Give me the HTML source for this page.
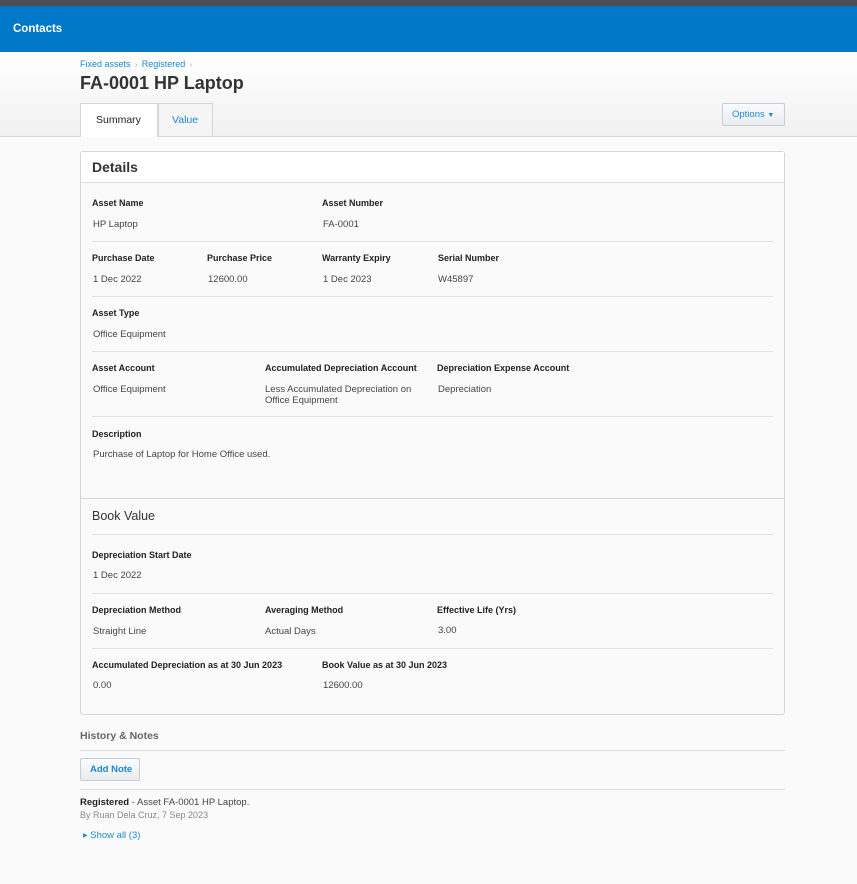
<!DOCTYPE html>
<html><head><meta charset="utf-8"><style>
*{margin:0;padding:0;box-sizing:border-box}
body{width:857px;height:884px;background:#fafafa;font-family:"Liberation Sans",Arial,sans-serif;position:relative;overflow:hidden;color:#333}
.a{position:absolute;white-space:nowrap}
.l{font-size:9px;font-weight:bold;color:#222}
.v{font-size:9.5px;color:#444}
.sep{position:absolute;left:92px;width:681px;height:1px;background:#e2e2e2}
</style></head><body>
<div class="a" style="left:0;top:0;width:857px;height:6px;background:#4b4f54"></div>
<div class="a" style="left:0;top:6px;width:857px;height:46px;background:#0078c8"></div>
<div class="a" style="left:13px;top:23px;font-size:11.5px;font-weight:bold;color:#fff">Contacts</div>
<div class="a" style="left:0;top:52px;width:857px;height:85px;background:linear-gradient(#fff,#f1f1f1);border-bottom:1px solid #d6d6d6"></div>
<div class="a" style="left:80px;top:59px;font-size:9px;color:#1a8ad0">Fixed assets <span style="color:#999;font-size:7px">&nbsp;›&nbsp;</span> Registered <span style="color:#999;font-size:7px">&nbsp;›</span></div>
<div class="a" style="left:80px;top:73px;font-size:18px;font-weight:bold;color:#333">FA-0001 HP Laptop</div>
<div class="a" style="left:80px;top:103px;width:78px;height:34px;background:#fff;border:1px solid #d6d6d6;border-bottom:none"></div>
<div class="a" style="left:96px;top:114px;font-size:10.5px;color:#222">Summary</div>
<div class="a" style="left:158px;top:103px;width:55px;height:33px;background:#f5f5f5;border:1px solid #d6d6d6;border-bottom:none"></div>
<div class="a" style="left:172px;top:114px;font-size:10.5px;color:#1a8ad0">Value</div>
<div class="a" style="left:722px;top:103px;width:63px;height:23px;background:linear-gradient(#fafbfc,#e9ecef);border:1px solid #c9cdd1;border-radius:2px"></div>
<div class="a" style="left:732px;top:109px;font-size:9.5px;color:#1a8ad0">Options <span style="font-size:7px">▼</span></div>

<div class="a" style="left:80px;top:151px;width:705px;height:564px;background:#fafafa;border:1px solid #d6d6d6;border-radius:3px"></div>
<div class="a" style="left:81px;top:152px;width:703px;height:31px;background:#fff;border-bottom:1px solid #ddd"></div>
<div class="a" style="left:92px;top:159px;font-size:14px;font-weight:bold;color:#333">Details</div>

<div class="a l" style="left:92px;top:198px">Asset Name</div>
<div class="a l" style="left:322px;top:198px">Asset Number</div>
<div class="a v" style="left:93px;top:219px">HP Laptop</div>
<div class="a v" style="left:323px;top:219px">FA-0001</div>
<div class="sep" style="top:241px"></div>
<div class="a l" style="left:92px;top:253px">Purchase Date</div>
<div class="a l" style="left:207px;top:253px">Purchase Price</div>
<div class="a l" style="left:322px;top:253px">Warranty Expiry</div>
<div class="a l" style="left:438px;top:253px">Serial Number</div>
<div class="a v" style="left:93px;top:274px">1 Dec 2022</div>
<div class="a v" style="left:208px;top:274px">12600.00</div>
<div class="a v" style="left:323px;top:274px">1 Dec 2023</div>
<div class="a v" style="left:438px;top:274px">W45897</div>
<div class="sep" style="top:296px"></div>
<div class="a l" style="left:92px;top:308px">Asset Type</div>
<div class="a v" style="left:93px;top:329px">Office Equipment</div>
<div class="sep" style="top:351px"></div>
<div class="a l" style="left:92px;top:363px">Asset Account</div>
<div class="a l" style="left:265px;top:363px">Accumulated Depreciation Account</div>
<div class="a l" style="left:437px;top:363px">Depreciation Expense Account</div>
<div class="a v" style="left:93px;top:384px">Office Equipment</div>
<div class="a v" style="left:265px;top:384px;line-height:11px">Less Accumulated Depreciation on<br>Office Equipment</div>
<div class="a v" style="left:438px;top:384px">Depreciation</div>
<div class="sep" style="top:416px"></div>
<div class="a l" style="left:92px;top:429px">Description</div>
<div class="a v" style="left:93px;top:449px">Purchase of Laptop for Home Office used.</div>

<div class="a" style="left:81px;top:498px;width:703px;height:1px;background:#d6d6d6"></div>
<div class="a" style="left:92px;top:509px;font-size:12.5px;color:#333">Book Value</div>
<div class="sep" style="top:534px"></div>
<div class="a l" style="left:92px;top:550px">Depreciation Start Date</div>
<div class="a v" style="left:93px;top:570px">1 Dec 2022</div>
<div class="sep" style="top:593px"></div>
<div class="a l" style="left:92px;top:605px">Depreciation Method</div>
<div class="a l" style="left:265px;top:605px">Averaging Method</div>
<div class="a l" style="left:437px;top:605px">Effective Life (Yrs)</div>
<div class="a v" style="left:93px;top:626px">Straight Line</div>
<div class="a v" style="left:265px;top:626px">Actual Days</div>
<div class="a v" style="left:438px;top:625px">3.00</div>
<div class="sep" style="top:648px"></div>
<div class="a l" style="left:92px;top:660px">Accumulated Depreciation as at 30 Jun 2023</div>
<div class="a l" style="left:322px;top:660px">Book Value as at 30 Jun 2023</div>
<div class="a v" style="left:93px;top:680px">0.00</div>
<div class="a v" style="left:323px;top:680px">12600.00</div>

<div class="a" style="left:80px;top:730px;font-size:10.5px;font-weight:bold;color:#666">History &amp; Notes</div>
<div class="a" style="left:80px;top:750px;width:705px;height:1px;background:#ddd"></div>
<div class="a" style="left:80px;top:758px;width:60px;height:23px;background:linear-gradient(#fafbfc,#e9ecef);border:1px solid #c9cdd1;border-radius:2px"></div>
<div class="a" style="left:90px;top:764px;font-size:9.5px;font-weight:bold;color:#1a8ad0">Add Note</div>
<div class="a" style="left:80px;top:789px;width:705px;height:1px;background:#ddd"></div>
<div class="a" style="left:80px;top:797px;font-size:9.5px;color:#444"><b style="color:#222">Registered</b> - Asset FA-0001 HP Laptop.</div>
<div class="a" style="left:80px;top:810px;font-size:9px;color:#888">By Ruan Dela Cruz, 7 Sep 2023</div>
<div class="a" style="left:83px;top:830px;font-size:9.5px;color:#1a8ad0"><span style="font-size:6px;vertical-align:1px">▶</span> Show all (3)</div>
</body></html>
